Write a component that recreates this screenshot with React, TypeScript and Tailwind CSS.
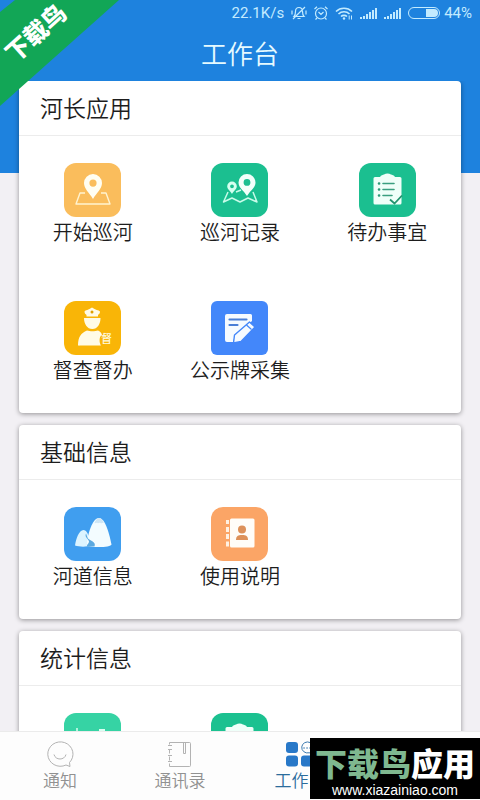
import React from 'react';

const PinMap = () => (
  <svg viewBox="0 0 57 54" className="h-full w-full" fill="none">
    <path
      d="M21 30H16L12 41H46L42 30H37"
      stroke="#fff3cf"
      strokeWidth="1.4"
      strokeLinejoin="round"
    />
    <path
      fillRule="evenodd"
      d="M29 11a9 9 0 0 0-9 9c0 6 5 9 9 16c4-7 9-10 9-16a9 9 0 0 0-9-9zm0 5.5a3.6 3.6 0 1 1 0 7.2a3.6 3.6 0 0 1 0-7.2z"
      fill="#fffef2"
    />
  </svg>
);

const RouteMap = () => (
  <svg viewBox="0 0 57 54" className="h-full w-full" fill="none">
    <path
      d="M17 29L12.500 39L21 35L29 39L37 35L46 39L42 29M25 29L30 27"
      stroke="#c8fbe9"
      strokeWidth="1.500"
      strokeLinejoin="round"
    />
    <path
      fillRule="evenodd"
      d="M21 18.500a4.800 4.800 0 0 0-4.800 4.800c0 3 2.800 4.200 4.800 7.700c2-3.500 4.800-4.700 4.800-7.700a4.800 4.800 0 0 0-4.800-4.800zm0 2.900a1.900 1.900 0 1 1 0 3.800a1.900 1.900 0 0 1 0-3.800z"
      fill="#d5fff0"
    />
    <path
      fillRule="evenodd"
      d="M36 11a8.500 8.500 0 0 0-8.500 8.500c0 5 4.800 7.500 8.500 13.500c3.700-6 8.500-8.500 8.500-13.500a8.500 8.500 0 0 0-8.500-8.500zm0 5a3.400 3.400 0 1 1 0 6.800a3.400 3.400 0 0 1 0-6.800z"
      fill="#f2fffa"
    />
  </svg>
);

const Checklist = () => (
  <svg viewBox="0 0 57 54" className="h-full w-full" fill="none">
    <path
      d="M16 14h5c1-2 3-2 4-2.500c2-1.200 5-1.200 7 0c1 .5 3 .5 4 2.500h5a1.500 1.500 0 0 1 1.500 1.500V40a1.500 1.500 0 0 1-1.500 1.500H16a1.500 1.500 0 0 1-1.500-1.500V15.500A1.500 1.500 0 0 1 16 14z"
      fill="#effff9"
    />
    <path
      d="M24 20.500h11M24 26.500h11M24 32.500h9"
      stroke="#3a9f80"
      strokeWidth="1.600"
      strokeLinecap="round"
    />
    <path
      d="M20 20.500h.1M20 26.500h.1M20 32.500h.1"
      stroke="#2b9a78"
      strokeWidth="2.600"
      strokeLinecap="round"
    />
    <path d="M31 36.500l4.500 4l7.500-8" stroke="#23946f" strokeWidth="1.800" />
  </svg>
);

const Officer = () => (
  <svg viewBox="0 0 57 54" className="h-full w-full">
    <path
      d="M20.500 10.500c1-1.500 4-1.500 7.500-4c3.500 2.500 6.500 2.500 8 4c0 2-1 2.500-2 3.500v1.500H22.500V14c-1-1-2-1.500-2-3.500z"
      fill="#fffbe6"
    />
    <circle cx="28" cy="11" r="1.500" fill="#e0a000" />
    <path
      d="M20 17h16.500c0 6-3 11-8.200 11S20 23 20 17z"
      fill="#fffbe6"
    />
    <path
      d="M14 44c0-8 3-12 9-14.500c3 1 8 1 11 0c2 1 3.500 2.500 4 4c-3 2-3 8-1 11H15.500a1 1 0 0 1-1.500-.5z"
      fill="#fffbe6"
    />
    <text
      x="37"
      y="42"
      fontSize="11"
      fontWeight="500"
      fill="#fffbe0"
      fontFamily="Noto Sans CJK SC, sans-serif"
    >
      督
    </text>
  </svg>
);

const NoteEdit = () => (
  <svg viewBox="0 0 57 54" className="h-full w-full" fill="none">
    <path
      d="M16 13h23.500a1.500 1.500 0 0 1 1.500 1.500V20L24 34.500L22 41h-6a2 2 0 0 1-2-2V15a2 2 0 0 1 2-2z"
      fill="#f6fbff"
    />
    <path
      d="M18.500 18.500h17M18.500 24h8"
      stroke="#4a7fd6"
      strokeWidth="2.200"
      strokeLinecap="round"
    />
    <path
      d="M38.500 21l5.500 5L30 40.500L22.500 42l1-8z"
      fill="#f6fbff"
      stroke="#4387fa"
      strokeWidth="1.400"
      strokeLinejoin="round"
    />
    <path d="M35.500 24l5 4.500" stroke="#4387fa" strokeWidth="1.200" />
  </svg>
);

const Mountains = () => (
  <svg viewBox="0 0 57 54" className="h-full w-full" fill="none">
    <path
      d="M11 38.500C12 32 15 23 19.500 23c2.500 0 4 2.500 5 6l3 9.500c-5 1.500-12 1.500-16.500 0z"
      fill="#dcf4ff"
    />
    <path
      d="M23 34C25 23 29 11 35 11c6.500 0 10.500 17 12.500 26.500c0 3-20 3.500-24.500 1z"
      fill="#f3fcff"
    />
    <path
      d="M30.500 16c1-3 3-5 4.500-5c2 0 3.800 2 5 5c-1.500-1-2 1-3.500 0s-2 1-3 0s-2 1-3 0z"
      fill="#cfe6f5"
    />
    <path
      d="M22 26.500c-2 4 3.500 6 3 8.500c-.4 1.800-2.500 2.500-2 4.500h7.500c2-5-4.500-5.500-6.500-8c-1-1.500-1-3-2-5z"
      fill="#5ba9e0"
    />
  </svg>
);

const ContactBook = () => (
  <svg viewBox="0 0 57 54" className="h-full w-full">
    <rect x="19" y="11.500" width="24.500" height="29" rx="1.500" fill="#fffdf8" />
    <path
      d="M15 13h3v4h-3zM15 20h3v5h-3zM15 27h3v5h-3zM15 34.500h3v5h-3z"
      fill="#fff1e2"
    />
    <circle cx="31" cy="22.500" r="4" fill="#dd9159" />
    <path d="M25 33c0-4 2-5 6-5s6 1 6 5z" fill="#dd9159" />
  </svg>
);

const Chart = () => (
  <svg viewBox="0 0 57 54" className="h-full w-full" fill="none">
    <path d="M13 15v26h31" stroke="#d9fff2" strokeWidth="1.500" />
    <path d="M16 33l8-9l6 5l9-11M35 17h5v5" stroke="#d9fff2" strokeWidth="2" />
  </svg>
);

const sections = [
  {
    title: '河长应用',
    items: [
      { label: '开始巡河', icon: PinMap, color: 'bg-[#fabd5c]' },
      { label: '巡河记录', icon: RouteMap, color: 'bg-[#1bbf90]' },
      { label: '待办事宜', icon: Checklist, color: 'bg-[#1bbf90]' },
      { label: '督查督办', icon: Officer, color: 'bg-[#f9b507]' },
      { label: '公示牌采集', icon: NoteEdit, color: 'bg-[#4387fa] rounded-md' },
    ],
  },
  {
    title: '基础信息',
    items: [
      { label: '河道信息', icon: Mountains, color: 'bg-[#409eef]' },
      { label: '使用说明', icon: ContactBook, color: 'bg-[#fba566]' },
    ],
  },
  {
    title: '统计信息',
    items: [
      { label: '', icon: Chart, color: 'bg-[#36d3a4]' },
      { label: '', icon: Checklist, color: 'bg-[#1bc190]' },
    ],
  },
];

const Signal = () => (
  <svg viewBox="0 0 17 11" className="h-[11px] w-[17px]" fill="currentColor">
    <path d="M0 9h2v2H0zM3 8h2v3H3zM6 6h2v5H6zM9 4h2v7H9zM12 2h2v9h-2zM15 0h2v11h-2z" />
  </svg>
);

const StatusBar = () => (
  <div className="flex h-[26px] items-center justify-end gap-[7px] pr-2 font-['Roboto','Liberation_Sans',sans-serif] text-[15px] font-normal text-[#c3ebff]">
    <span>22.1K/s</span>
    <svg
      viewBox="0 0 16 14"
      className="h-[14px] w-4"
      fill="none"
      stroke="currentColor"
      strokeWidth="1.200"
    >
      <path d="M3 10.500h10c-1.500-1.500-1.500-3-1.500-5C11.500 3 10 1.500 8 1.500S4.500 3 4.500 5.500c0 2 0 3.500-1.500 5zM6.500 12.500h3M2 13L14 1M1 4.500v4M15 4.500v4" />
    </svg>
    <svg
      viewBox="0 0 14 14"
      className="h-[14px] w-[14px]"
      fill="none"
      stroke="currentColor"
      strokeWidth="1.200"
    >
      <circle cx="7" cy="7.500" r="5.500" />
      <path d="M4.500 6L7 8.500L9.500 6M.5 3L3 .8M13.500 3L11 .8M3 12l-1.500 1.500M11 12l1.500 1.500" />
    </svg>
    <svg
      viewBox="0 0 18 13"
      className="h-[13px] w-[18px]"
      fill="none"
      stroke="currentColor"
      strokeWidth="1.600"
    >
      <path d="M1 4.500c4.500-4.300 11.500-4.300 16 0M3.500 7c3-3 8-3 11 0M6 9.500c1.500-1.500 4.500-1.500 6 0" />
      <circle cx="9" cy="11.500" r="1.200" fill="currentColor" stroke="none" />
      <path d="M14.200 8.500v4M16.500 8.500v4" strokeWidth="1" />
    </svg>
    <Signal />
    <Signal />
    <div className="flex items-center gap-1">
      <div className="flex h-3 w-8 justify-end rounded-full border border-current p-px">
        <div className="w-3 rounded-r-full bg-current"></div>
      </div>
      <span>44%</span>
    </div>
  </div>
);

const Ribbon = () => (
  <div className="absolute left-0 top-0 z-20 h-[106px] w-[120px]">
    <svg viewBox="0 0 120 106" className="absolute h-full w-full">
      <path d="M15 0H119L0 106V12z" fill="#12a656" />
    </svg>
    <div className="relative flex h-16 w-[70px] items-center justify-center">
      <span className="-rotate-[42deg] whitespace-nowrap text-[24px] font-black leading-5 text-white">
        下载鸟
      </span>
    </div>
  </div>
);

const NoticeIcon = () => (
  <svg viewBox="0 0 28 28" className="h-7 w-7" fill="none" stroke="#b3b3b3">
    <path d="M23.500 22.500A12.600 12.200 0 1 0 20 25l4 1.500z" />
    <path d="M8 14.500c1.500 6 10.500 6 12 0" />
  </svg>
);

const BookIcon = () => (
  <svg viewBox="0 0 28 28" className="h-7 w-7" fill="none" stroke="#b3b3b3">
    <path d="M3.500 4.500v-2h20a1 1 0 0 1 1 1v22a1 1 0 0 1-1 1h-20v-3M3.500 9.500v4M3.500 16.500v4" />
    <path d="M2 5.500h4M2 9.500h4M2 15.500h4M2 21.500h4M17.500 3v10.500h2V3" />
  </svg>
);

const WorkIcon = () => (
  <svg viewBox="0 0 28 28" className="h-7 w-7" fill="#2878c8">
    <rect x="0" y="2" width="12" height="11" rx="3" />
    <rect x="0" y="15.500" width="12" height="11" rx="3" />
    <rect x="15" y="15.500" width="12" height="11" rx="3" />
    <path
      d="M25.500 11.500A5.800 5.500 0 1 0 23 12.800l3 .2z"
      fill="none"
      stroke="#3b7ab0"
    />
    <path
      d="M18 8h.1M21 8h.1M24 8h.1"
      stroke="#3b7ab0"
      strokeWidth="1.500"
      strokeLinecap="round"
    />
  </svg>
);

const tabs = [
  { label: '通知', icon: NoticeIcon, color: 'text-[#919191]' },
  { label: '通讯录', icon: BookIcon, color: 'text-[#919191]' },
  { label: '工作台', icon: WorkIcon, color: 'text-[#2b6c9c]' },
];

const App = () => {
  return (
    <div className="relative flex h-screen flex-col overflow-hidden bg-[#f2f0f4] font-['Noto_Sans_CJK_SC',sans-serif] font-[350] text-[#1d1d1d]">
      <Ribbon />
      <header className="shrink-0 bg-[#1e82de] pb-[92px]">
        <StatusBar />
        <h1 className="h-[55px] text-center text-[26px] leading-[53px] text-[#e6faff]">
          工作台
        </h1>
      </header>

      <main className="-mt-[92px] flex min-h-0 flex-1 flex-col gap-3 overflow-hidden px-[19px]">
        {sections.map((section) => (
          <section
            key={section.title}
            className="shrink-0 rounded bg-white shadow-[0_1px_5px_rgba(0,0,0,0.4)]"
          >
            <h2 className="h-[55px] border-b border-[#ececec] px-[21px] text-[23px] leading-[52px]">
              {section.title}
            </h2>
            <div className="grid grid-cols-3 gap-y-[54px] pb-7 pt-[27px]">
              {section.items.map(({ label, icon: Icon, color }, i) => (
                <button key={i} className="flex flex-col items-center">
                  <span
                    className={`block h-[54px] w-[57px] overflow-hidden ${
                      color.includes('rounded') ? '' : 'rounded-xl'
                    } ${color}`}
                  >
                    <Icon />
                  </span>
                  <span className="h-[30px] whitespace-nowrap text-[20px] leading-[30px]">
                    {label}
                  </span>
                </button>
              ))}
            </div>
          </section>
        ))}
      </main>

      <nav className="z-10 grid h-[69px] shrink-0 grid-cols-4 border-t border-[#ebebeb] bg-[#fdfdfd]">
        {tabs.map(({ label, icon: Icon, color }) => (
          <button
            key={label}
            className={`flex flex-col items-center pt-2 text-[17px] leading-6 ${color}`}
          >
            <Icon />
            {label}
          </button>
        ))}
      </nav>

      <div className="absolute bottom-px right-0 z-20 flex h-[61px] w-[170px] flex-col items-center bg-black text-white">
        <p className="mt-1 whitespace-nowrap text-[32px] font-black leading-10">
          <span className="text-[#7fb890]">下载鸟</span>应用
        </p>
        <p className="font-['Liberation_Sans',sans-serif] text-[14px] leading-4">
          www.xiazainiao.com
        </p>
      </div>
    </div>
  );
};

export default App;
